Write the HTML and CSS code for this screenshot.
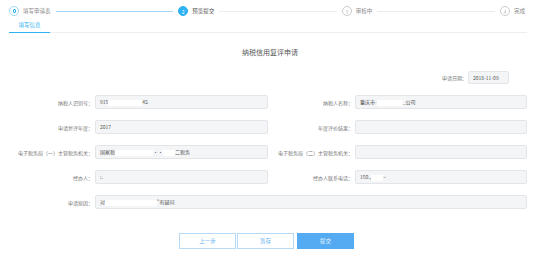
FILE: index.html
```html
<!DOCTYPE html>
<html lang="zh-CN">
<head>
    <meta charset="UTF-8">
    <title>纳税信用复评申请</title>
    <link rel="stylesheet" href="styles.css">
</head>
<body>
    <div class="steps">
        <div class="step done">
            <span class="circle"><span class="edit"></span></span>
            <span class="step-name">填写申请表</span>
        </div>
        <div class="line done"></div>
        <div class="step active">
            <span class="circle">2</span>
            <span class="step-name">预览提交</span>
        </div>
        <div class="line"></div>
        <div class="step">
            <span class="circle">3</span>
            <span class="step-name">审核中</span>
        </div>
        <div class="line"></div>
        <div class="step">
            <span class="circle">4</span>
            <span class="step-name">完成</span>
        </div>
    </div>

    <div class="tabs">
        <div class="tab">填写信息</div>
    </div>

    <h2 class="title">纳税信用复评申请</h2>

    <div class="date-row">
        <span class="label">申请日期：</span>
        <div class="box date-box">2018-11-09</div>
    </div>

    <div class="form">
        <div class="field">
            <span class="label left">纳税人识别号：</span>
            <div class="box">915<span class="mask" style="width: 34px"></span>4S</div>
        </div>
        <div class="field">
            <span class="label right">纳税人名称：</span>
            <div class="box">重庆市-<span class="mask" style="width: 26px"></span>_公司</div>
        </div>
        <div class="field">
            <span class="label left">申请复评年度：</span>
            <div class="box">2017</div>
        </div>
        <div class="field">
            <span class="label right">年度评价结果：</span>
            <div class="box"></div>
        </div>
        <div class="field">
            <span class="label left">电子税务局（一）主管税务机关：</span>
            <div class="box">国家税<span class="mask" style="width: 38px"></span>··<span class="mask" style="width: 12px"></span>二税务</div>
        </div>
        <div class="field">
            <span class="label right">电子税务局（二）主管税务机关：</span>
            <div class="box"></div>
        </div>
        <div class="field">
            <span class="label left">经办人：</span>
            <div class="box">:.</div>
        </div>
        <div class="field">
            <span class="label right">经办人联系电话：</span>
            <div class="box">150.,<span class="mask" style="width: 12px"></span>~</div>
        </div>
        <div class="field wide">
            <span class="label left">申请原因：</span>
            <div class="box">对<span class="mask" style="width: 52px"></span>"有疑问</div>
        </div>
    </div>

    <div class="actions">
        <button class="btn">上一步</button>
        <button class="btn">暂存</button>
        <button class="btn primary">提交</button>
    </div>
</body>
</html>
```

FILE: styles.css
```css
:root {
    --blue: #2db2f3;
    --light-blue: #9fd7f6;
    --btn-blue: #55abf2;
    --text: #666;
    --box-bg: #f4f5f7;
    --box-border: #e3e5e8;
}

* {
    box-sizing: border-box;
    margin: 0;
    padding: 0;
}

body {
    width: 540px;
    height: 257px;
    overflow: hidden;
    background: #fff;
    color: var(--text);
    font-family: "Noto Sans CJK SC", "Liberation Sans", sans-serif;
}

/* steps */
.steps {
    display: flex;
    align-items: center;
    height: 21px;
    padding: 1px 15px 0 9px;
}

.step {
    display: flex;
    align-items: center;
    gap: 4px;
}

.circle {
    width: 10px;
    height: 10px;
    border: 1px solid #ccc;
    border-radius: 50%;
    display: flex;
    align-items: center;
    justify-content: center;
    font-size: 5px;
    line-height: 1;
    color: #bbb;
}

.step.done .circle {
    border-color: var(--light-blue);
    width: 10px;
}

.edit {
    width: 3px;
    height: 4px;
    border: 1px solid var(--blue);
    border-radius: 1px;
}

.step.active .circle {
    background: var(--blue);
    border-color: var(--blue);
    color: #fff;
}

.step-name {
    font-size: 5.5px;
    color: #888;
    white-space: nowrap;
}

.step.active .step-name {
    color: #555;
}

.line {
    flex: 1;
    height: 1px;
    margin: 0 5px;
    background: #ececec;
}

.line.done {
    background: var(--light-blue);
}

/* tabs */
.tabs {
    display: flex;
    margin: 0 13px 0 9px;
    border-bottom: 1px solid #eee;
}

.tab {
    width: 41px;
    height: 12px;
    text-align: center;
    font-size: 5.5px;
    line-height: 9px;
    color: var(--blue);
    border-bottom: 1.5px solid var(--blue);
    margin-bottom: -1px;
}

.title {
    text-align: center;
    font-size: 7px;
    font-weight: normal;
    color: #555;
    margin-top: 14px;
    line-height: 10px;
}

/* date */
.date-row {
    display: flex;
    justify-content: flex-end;
    align-items: center;
    gap: 1px;
    padding-right: 31px;
    margin-top: 14px;
}

.label {
    font-size: 5px;
    color: #777;
    white-space: nowrap;
}

.box {
    height: 14px;
    background: var(--box-bg);
    border: 1px solid var(--box-border);
    border-radius: 2px;
    font-size: 5px;
    line-height: 12px;
    padding-left: 4px;
    color: #555;
    white-space: nowrap;
    overflow: hidden;
}

.date-box {
    width: 41px;
    height: 13px;
    line-height: 11px;
}

.mask {
    display: inline-block;
    height: 6px;
    vertical-align: middle;
    background: #fff;
}

/* form */
.form {
    display: grid;
    grid-template-columns: 268px 259px;
    row-gap: 11px;
    margin-top: 11px;
}

.field {
    display: flex;
    align-items: center;
}

.field .box {
    flex: 1;
}

.label.left {
    width: 95px;
    text-align: right;
    padding-right: 2px;
}

.label.right {
    width: 87px;
    text-align: right;
    padding-right: 2px;
}

.field.wide {
    grid-column: 1 / 3;
}

/* buttons */
.actions {
    display: flex;
    justify-content: center;
    gap: 1px;
    margin-top: 24px;
    padding-right: 7px;
}

.btn {
    width: 57px;
    height: 16px;
    border: 1px solid #b5dbf8;
    background: #fff;
    color: #6cb4f0;
    font-family: inherit;
    font-size: 5.5px;
    cursor: pointer;
}

.btn.primary {
    margin-left: 2px;
    background: var(--btn-blue);
    border-color: var(--btn-blue);
    color: #e8f3fd;
}
```
